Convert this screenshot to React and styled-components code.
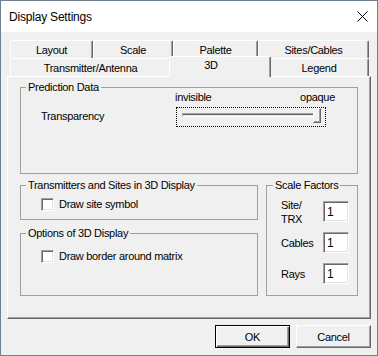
import React from "react";
import styled, { createGlobalStyle } from "styled-components";

const GlobalStyle = createGlobalStyle`
  html, body {
    margin: 0;
    padding: 0;
    background: #ffffff;
  }
  * {
    box-sizing: border-box;
  }
`;

const topTabs = [
  { label: "Layout", width: 83 },
  { label: "Scale", width: 80 },
  { label: "Palette", width: 85 },
  { label: "Sites/Cables", width: 111 },
];

const bottomTabs = [
  { label: "Transmitter/Antenna", width: 161 },
  { label: "3D", width: 98, active: true },
  { label: "Legend", width: 100 },
];

const scaleFactors = [
  { label: ["Site/", "TRX"], value: "1" },
  { label: ["Cables"], value: "1" },
  { label: ["Rays"], value: "1" },
];

export default function App() {
  return (
    <>
      <GlobalStyle />
      <Window>
        <TitleBar>
          <Title>Display Settings</Title>
          <CloseButton>
            <svg width="11" height="11" viewBox="0 0 11 11">
              <path
                d="M0.5 0.5 L10.5 10.5 M10.5 0.5 L0.5 10.5"
                stroke="#000"
                strokeWidth="1"
                fill="none"
              />
            </svg>
          </CloseButton>
        </TitleBar>
        <Body>
          <TabRow>
            {topTabs.map((t) => (
              <Tab key={t.label} $width={t.width}>
                {t.label}
              </Tab>
            ))}
          </TabRow>
          <TabRow>
            {bottomTabs.map((t) => (
              <Tab key={t.label} $width={t.width} $active={t.active}>
                {t.label}
              </Tab>
            ))}
          </TabRow>
          <Panel>
            <Group $height={93}>
              <Legend>Prediction Data</Legend>
              <PredictionRow>
                <FieldLabel>Transparency</FieldLabel>
                <SliderColumn>
                  <SliderLabels>
                    <span>invisible</span>
                    <span>opaque</span>
                  </SliderLabels>
                  <SliderBox>
                    <Track />
                    <Thumb />
                  </SliderBox>
                </SliderColumn>
              </PredictionRow>
            </Group>
            <LowerArea>
              <LeftColumn>
                <Group $height={41}>
                  <Legend>Transmitters and Sites in 3D Display</Legend>
                  <CheckRow $top={6}>
                    <CheckBox />
                    <span>Draw site symbol</span>
                  </CheckRow>
                </Group>
                <Group $height={69}>
                  <Legend>Options of 3D Display</Legend>
                  <CheckRow $top={10}>
                    <CheckBox />
                    <span>Draw border around matrix</span>
                  </CheckRow>
                </Group>
              </LeftColumn>
              <Group $height={117} $flex>
                <Legend $offset={6}>Scale Factors</Legend>
                <FactorGrid>
                  {scaleFactors.map((f) => (
                    <React.Fragment key={f.label.join("")}>
                      <FactorLabel>
                        {f.label.map((l, i) => (
                          <div key={i}>{l}</div>
                        ))}
                      </FactorLabel>
                      <FactorInput defaultValue={f.value} />
                    </React.Fragment>
                  ))}
                </FactorGrid>
              </Group>
            </LowerArea>
          </Panel>
          <ButtonRow>
            <Button $default>OK</Button>
            <Button>Cancel</Button>
          </ButtonRow>
        </Body>
      </Window>
    </>
  );
}

const Window = styled.div`
  width: 378px;
  height: 356px;
  border: 1px solid #70808f;
  background: #f0f0f0;
  font-family: "Liberation Sans", Arial, sans-serif;
  font-size: 11px;
  letter-spacing: -0.3px;
  color: #000;
  display: flex;
  flex-direction: column;
`;

const TitleBar = styled.div`
  height: 31px;
  background: #ffffff;
  display: flex;
  align-items: center;
  justify-content: space-between;
  padding: 1px 9px 0 8px;
`;

const Title = styled.div`
  font-size: 12px;
  letter-spacing: -0.2px;
`;

const CloseButton = styled.div`
  width: 11px;
  height: 11px;
  display: flex;
  margin-top: -1px;

  svg {
    display: block;
  }
`;

const Body = styled.div`
  flex: 1;
  padding: 8px 6px 0 6px;
`;

const TabRow = styled.div`
  display: flex;
  padding-left: 3px;
  height: 18px;
`;

const Tab = styled.div`
  position: relative;
  width: ${({ $width, $active }) => ($active ? $width + 4 : $width)}px;
  height: ${({ $active }) => ($active ? 21 : 18)}px;
  margin: ${({ $active }) => ($active ? "-2px -2px 0 -2px" : "0")};
  z-index: ${({ $active }) => ($active ? 2 : 0)};
  background: #f0f0f0;
  border-top: 1px solid #ffffff;
  border-left: 1px solid #ffffff;
  border-right: 1px solid #696969;
  border-top-left-radius: 2px;
  border-top-right-radius: 2px;
  box-shadow: inset -1px 0 0 #a0a0a0;
  text-align: center;
  text-indent: ${({ $active }) => ($active ? -18 : 0)}px;
  line-height: 13px;
  padding-top: ${({ $active }) => ($active ? 2 : 3)}px;
  white-space: nowrap;
`;

const Panel = styled.div`
  position: relative;
  z-index: 1;
  width: 364px;
  height: 243px;
  border-top: 1px solid #ffffff;
  border-left: 1px solid #ffffff;
  border-right: 1px solid #696969;
  border-bottom: 1px solid #696969;
  box-shadow: inset -1px -1px 0 #a0a0a0;
  padding: 4px 12px 0 12px;
`;

const Group = styled.fieldset`
  margin: 0;
  padding: 0;
  min-width: 0;
  height: ${({ $height }) => $height}px;
  border: 1px solid #a0a0a0;
  flex: ${({ $flex }) => ($flex ? 1 : "none")};
`;

const Legend = styled.legend`
  padding: 0 2px;
  margin-left: ${({ $offset }) => $offset ?? 5}px;
  line-height: 13px;
`;

const PredictionRow = styled.div`
  display: flex;
  align-items: flex-start;
  margin-top: -3px;
  padding-left: 20px;
`;

const FieldLabel = styled.div`
  width: 134px;
  margin-top: 19px;
  line-height: 13px;
`;

const SliderColumn = styled.div`
  display: flex;
  flex-direction: column;
  width: 160px;
`;

const SliderLabels = styled.div`
  display: flex;
  justify-content: space-between;
  line-height: 13px;
`;

const SliderBox = styled.div`
  position: relative;
  width: 150px;
  height: 20px;
  margin: 3px 0 0 1px;
  border: 1px dotted #000;
  padding: 5px 0 0 5px;
`;

const Track = styled.div`
  width: 136px;
  height: 4px;
  border-top: 1px solid #a0a0a0;
  border-left: 1px solid #a0a0a0;
  border-bottom: 1px solid #ffffff;
  border-right: 1px solid #ffffff;
  background: #696969;
  box-shadow: inset 0 -1px 0 #e3e3e3;
`;

const Thumb = styled.div`
  position: absolute;
  left: 136px;
  top: 0;
  width: 8px;
  height: 15px;
  background: #f0f0f0;
  border-top: 1px solid #ffffff;
  border-left: 1px solid #ffffff;
  border-right: 1px solid #696969;
  border-bottom: 1px solid #696969;
  box-shadow: inset -1px -1px 0 #a0a0a0;
`;

const LowerArea = styled.div`
  display: flex;
  gap: 8px;
  margin-top: 5px;
`;

const LeftColumn = styled.div`
  display: flex;
  flex-direction: column;
  gap: 7px;
  width: 238px;
`;

const CheckRow = styled.label`
  display: flex;
  align-items: center;
  gap: 5px;
  margin-top: ${({ $top }) => $top}px;
  padding-left: 20px;
  line-height: 13px;
`;

const CheckBox = styled.span`
  display: block;
  width: 13px;
  height: 13px;
  background: #ffffff;
  border: 1px solid;
  border-color: #a0a0a0 #ffffff #ffffff #a0a0a0;
  box-shadow: inset 1px 1px 0 #696969, inset -1px -1px 0 #e3e3e3;
`;

const FactorGrid = styled.div`
  display: grid;
  grid-template-columns: 42px 26px;
  grid-auto-rows: 21px;
  row-gap: 10px;
  align-items: center;
  margin-top: 9px;
  padding-left: 14px;
`;

const FactorLabel = styled.div`
  line-height: 14px;
`;

const FactorInput = styled.input`
  width: 26px;
  height: 21px;
  margin: 0;
  padding: 0 0 0 3px;
  font: inherit;
  letter-spacing: 0;
  font-size: 12px;
  background: #ffffff;
  border: 1px solid;
  border-color: #a0a0a0 #ffffff #ffffff #a0a0a0;
  box-shadow: inset 1px 1px 0 #696969, inset -1px -1px 0 #e3e3e3;
  outline: none;
`;

const ButtonRow = styled.div`
  display: flex;
  justify-content: flex-end;
  gap: 6px;
  margin-top: 6px;
`;

const Button = styled.button`
  width: 75px;
  height: 23px;
  margin: 0;
  padding: 0;
  font: inherit;
  letter-spacing: -0.3px;
  color: #000;
  background: #f0f0f0;
  border: 1px solid;
  border-color: ${({ $default }) =>
    $default ? "#000" : "#ffffff #696969 #696969 #ffffff"};
  box-shadow: ${({ $default }) =>
    $default
      ? "inset 1px 1px 0 #ffffff, inset -1px -1px 0 #696969, inset -2px -2px 0 #a0a0a0"
      : "inset -1px -1px 0 #a0a0a0"};
`;
